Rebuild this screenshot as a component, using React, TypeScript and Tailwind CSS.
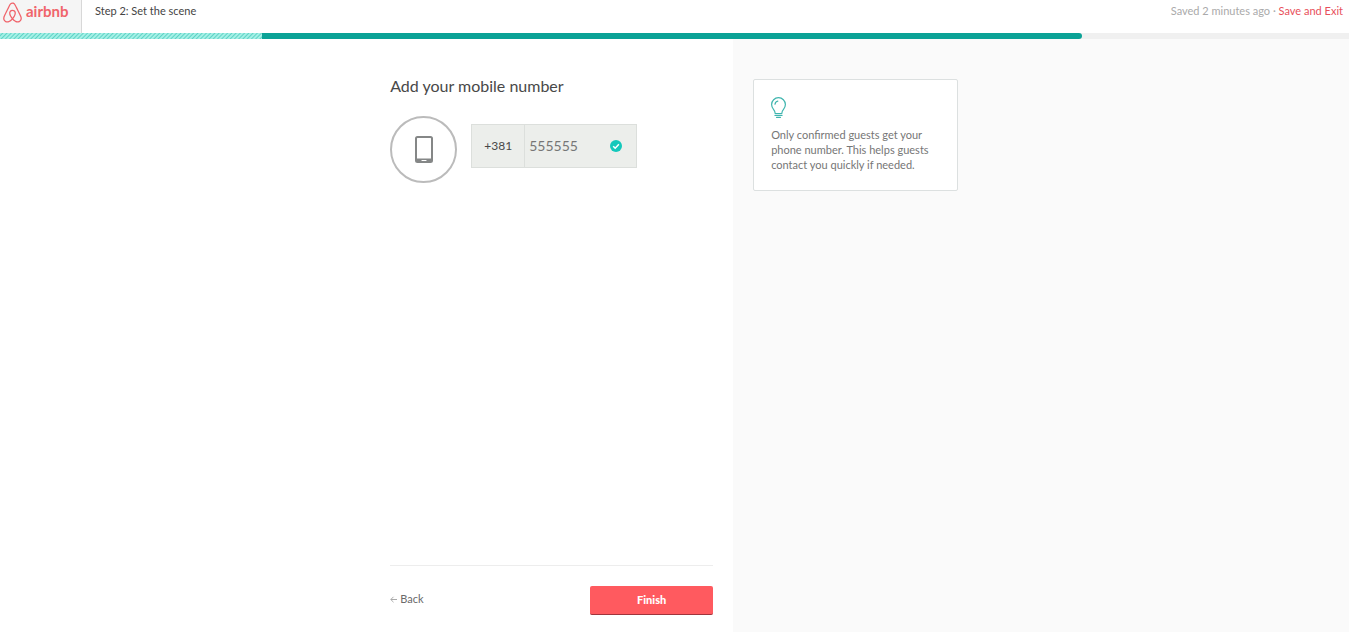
import { FaAirbnb } from "react-icons/fa6";

function PhoneIcon() {
  return (
    <svg aria-hidden="true" viewBox="0 0 18 28" className="h-7 w-[18px]">
      <rect x="1" y="1" width="16" height="25" rx="1.500" fill="none" stroke="#858787" strokeWidth="2" />
      <path d="M1 22.500h16V26H1z" fill="#858787" />
      <path d="M7 24.500h4" stroke="#fff" strokeWidth="1.200" strokeLinecap="round" />
    </svg>
  );
}

function BulbIcon() {
  return (
    <svg
      aria-hidden="true"
      viewBox="0 0 15 21"
      className="h-[21px] w-[15px]"
      fill="none"
      stroke="#3fb5ae"
      strokeWidth="1.200"
      strokeLinecap="round"
      strokeLinejoin="round"
    >
      <path d="M4.200 16.500h6.600c0-1.800.6-2.900 1.700-4.200 1-1.200 1.900-2.600 1.900-4.700a6.900 6.900 0 0 0-13.800 0c0 2.100.9 3.500 1.900 4.700 1.100 1.300 1.700 2.400 1.700 4.200z" />
      <path d="M4 7.200C4.200 5.500 5.100 4.500 6.800 4.200" />
      <path d="M4 18.400h7M5.500 20.300h4" />
    </svg>
  );
}

function Header() {
  return (
    <header className="flex h-[33px] bg-white">
      <a
        href="#"
        aria-label="airbnb home"
        className="flex w-[82px] shrink-0 items-start border-r border-[#d8d8d8] bg-[#f5f5f5] pt-px pl-px text-[#f0646b]"
      >
        <FaAirbnb aria-hidden="true" className="size-[23px]" />
        <span className="pl-0.5 text-[15px] leading-[21px] font-bold">airbnb</span>
      </a>
      <p className="pt-[3px] pl-[13px] text-[11px] leading-4 text-[#444]">Step 2: Set the scene</p>
      <p className="ml-auto pt-[3px] pr-1.5 text-[11px] leading-4 text-[#aaa]">
        Saved 2 minutes ago ·{" "}
        <a href="#" className="text-[#e8505b]">
          Save and Exit
        </a>
      </p>
    </header>
  );
}

function Progress() {
  return (
    <div
      role="progressbar"
      aria-label="Listing progress"
      aria-valuenow={80}
      aria-valuemin={0}
      aria-valuemax={100}
      className="flex h-1.5 bg-[#f0f0f0]"
    >
      <div className="w-[19.4%] bg-[repeating-linear-gradient(135deg,#a5f0e6_0px,#a5f0e6_1px,#5fd3c6_2px,#a5f0e6_3px)]" />
      <div className="w-[60.8%] rounded-r-[3px] bg-[#0ba296]" />
    </div>
  );
}

function PhoneField() {
  return (
    <div className="flex h-11 w-[166px] border border-[#dcdfdc] bg-[#eceeeb]">
      <label
        htmlFor="phone"
        className="flex w-[53px] items-center justify-center border-r border-[#dcdfdc] text-[12px] text-[#484848]"
      >
        +381
      </label>
      <input
        id="phone"
        type="tel"
        defaultValue="555555"
        className="w-0 flex-1 bg-transparent pb-0.5 pl-1 text-[14px] text-[#767676] outline-none"
      />
      <svg aria-hidden="true" viewBox="0 0 12 12" className="mr-3.5 size-3 self-center">
        <circle cx="6" cy="6" r="6" fill="#14c8bb" />
        <path d="M3.200 6.200l2 2 3.700-3.900" fill="none" stroke="#fff" strokeWidth="1.500" />
      </svg>
    </div>
  );
}

export default function App() {
  return (
    <div className="flex min-h-screen flex-col bg-white font-['Lato',sans-serif]">
      <Header />
      <Progress />
      <div className="flex flex-1">
        <main className="flex w-[54.35%] flex-col pr-5">
          <form
            className="ml-auto flex w-full max-w-[323px] flex-1 flex-col pt-[35px]"
            onSubmit={(e) => e.preventDefault()}
          >
            <h1 className="text-[16px] leading-6 text-[#484848]">Add your mobile number</h1>
            <div className="mt-[18px] flex gap-3.5">
              <div className="flex size-[67px] items-center justify-center rounded-full border-2 border-[#bbb]">
                <PhoneIcon />
              </div>
              <div className="pt-2">
                <PhoneField />
              </div>
            </div>
            <div className="mt-auto flex items-start justify-between border-t border-[#ededed] pt-5 pb-[17px]">
              <a href="#" className="flex items-center gap-[3px] pt-[5px] text-[11px] leading-4 text-[#6a6a6a]">
                <svg aria-hidden="true" viewBox="0 0 7 7" className="size-[7px]" fill="none" stroke="#aaa">
                  <path d="M7 3.500H.8M3.500.8L.8 3.500l2.700 2.700" />
                </svg>
                Back
              </a>
              <button
                type="submit"
                className="h-[29px] w-[123px] rounded-[2px] border-b border-[#a0353c] bg-[#ff5a5f] text-[11px] font-black text-white"
              >
                Finish
              </button>
            </div>
          </form>
        </main>
        <aside className="flex-1 bg-[#fafafa] pt-10 pl-5">
          <div className="w-[205px] rounded-[2px] border border-[#dce0e0] bg-white px-[17px] pt-[17px] pb-[18px]">
            <BulbIcon />
            <p className="mt-[9px] text-[11px] leading-[15px] text-[#767676]">
              Only confirmed guests get your phone number. This helps guests contact you quickly if needed.
            </p>
          </div>
        </aside>
      </div>
    </div>
  );
}
